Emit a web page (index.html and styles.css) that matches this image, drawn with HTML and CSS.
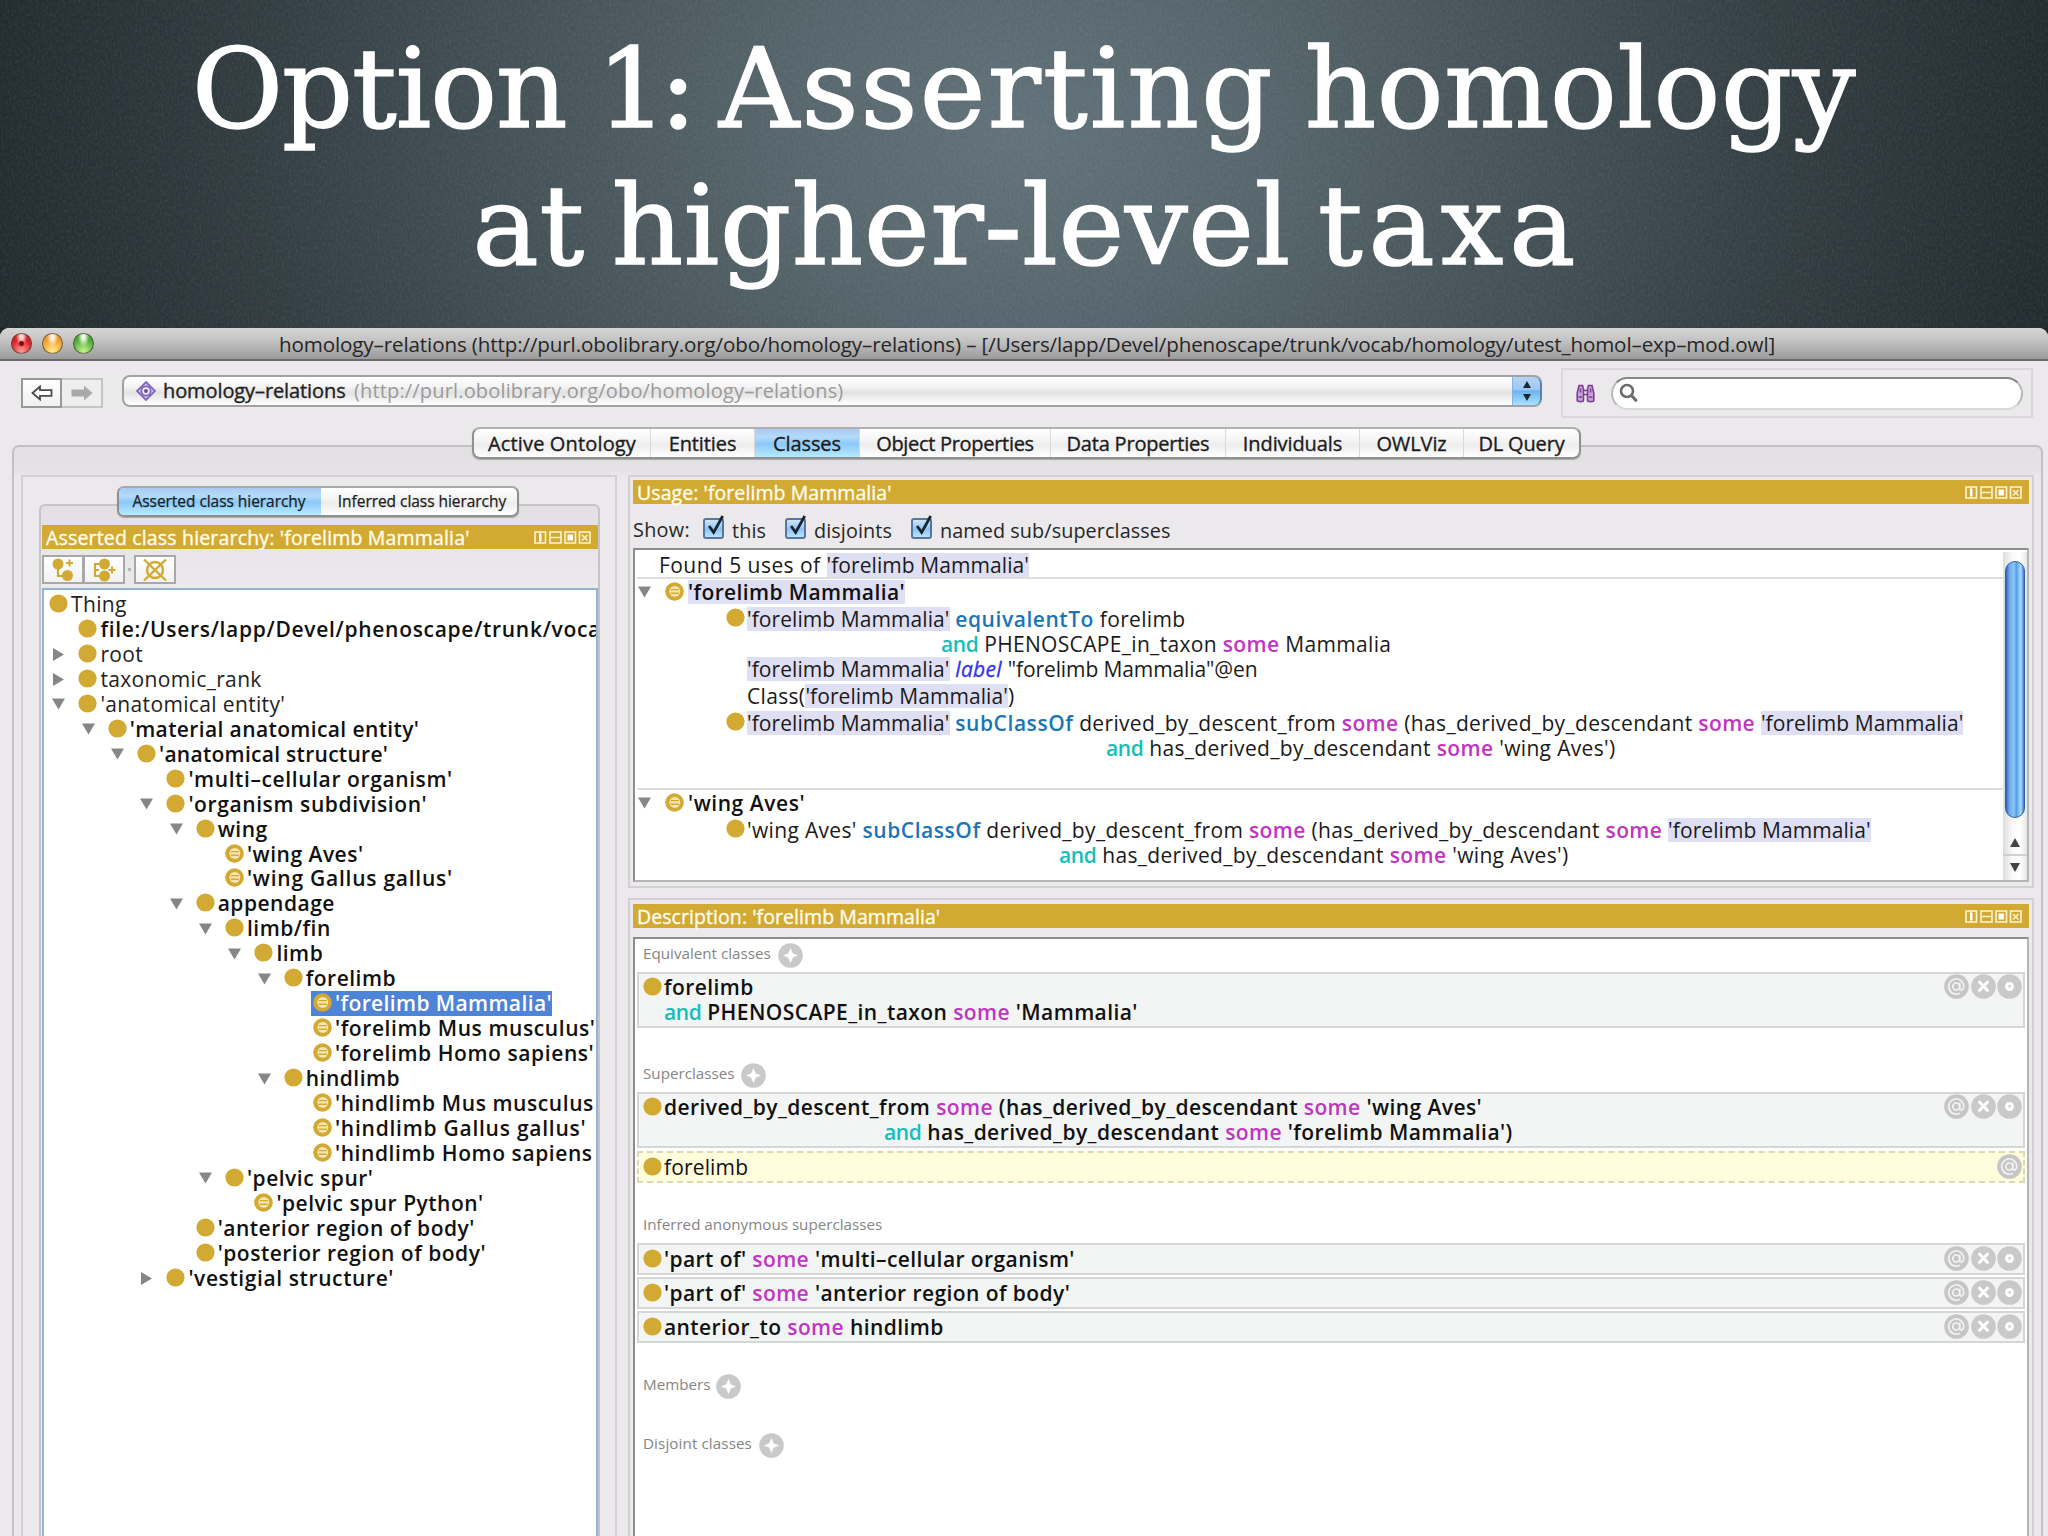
FILE: index.html
```html
<!DOCTYPE html>
<html lang="en">
<head>
<meta charset="utf-8">
<title>Option 1: Asserting homology at higher-level taxa</title>
<link rel="stylesheet" href="styles.css">
</head>
<body>
<svg class="defs" width="0" height="0" aria-hidden="true">
  <symbol id="dot" viewBox="0 0 20 20"><circle cx="10" cy="10" r="9.6" fill="#d2aa33"/></symbol>
  <symbol id="eq" viewBox="0 0 20 20"><circle cx="10" cy="10" r="9.8" fill="#d2aa33"/><circle cx="10.3" cy="9.800" r="5.700" fill="#f6e6b4"/><path d="M6 8h8.500M6 11.800h8.500" stroke="#d2aa33" stroke-width="1.500"/></symbol>
  <symbol id="down" viewBox="0 0 14 12"><path d="M0 0h14L7 12z" fill="#868686"/></symbol>
  <symbol id="right" viewBox="0 0 12 14"><path d="M0 0v14l12-7z" fill="#868686"/></symbol>
  <symbol id="plus" viewBox="0 0 26 26"><circle cx="13" cy="13" r="12.8" fill="#c9c9c9"/><path d="M13 7l1.800 4.200L19 13l-4.200 1.800L13 19l-1.800-4.200L7 13l4.200-1.800z" fill="#fff" stroke="#fff" stroke-width="1.400"/></symbol>
  <symbol id="x" viewBox="0 0 26 26"><circle cx="13" cy="13" r="12.8" fill="#c9c9c9"/><path d="M8 7.500l10 10.500M18 7.500L8 18" stroke="#fff" stroke-width="3.2"/></symbol>
  <symbol id="o" viewBox="0 0 26 26"><circle cx="13" cy="13" r="12.8" fill="#c9c9c9"/><circle cx="13" cy="13" r="4.600" fill="#fff"/><circle cx="13" cy="13" r="1.500" fill="#d4d4d4"/></symbol>
  <symbol id="at" viewBox="0 0 26 26"><circle cx="13" cy="13" r="12.8" fill="#c6c6c6"/><circle cx="12.700" cy="13" r="3.600" fill="none" stroke="#f4f4f4" stroke-width="1.700"/><path d="M16.500 9v6.200c0 2.600 4 2 4-2.400a7.800 8 0 1 0-4 7.200" fill="none" stroke="#f4f4f4" stroke-width="1.700"/></symbol>
  <symbol id="wins" viewBox="0 0 57 13"><g fill="none" stroke="#fdf3d3" stroke-width="1.600"><path d="M1 1h10.500v11H1zM6.200 1v11M16 1h11v11H16zM16 6.500h11M31 1h10.500v11H31zM45.500 1h10.500v11H45.500zM48 4l5.500 5.500M53.500 4L48 9.500"/></g><path d="M5 3h2.500v7H5zM33.500 3.500h5.500v6h-5.500z" fill="#fff"/></symbol>
</svg>

<header class="slide-title">
  <svg class="grain" aria-hidden="true"><filter id="noise"><feTurbulence type="fractalNoise" baseFrequency=".5 .3" numOctaves="2" seed="4"/><feColorMatrix values="0 0 0 0 .75  0 0 0 0 .8  0 0 0 0 .85  1.200 0 0 0 -.45"/></filter><rect width="100%" height="100%" filter="url(#noise)"/></svg>
  <h1><span class="line-one">Option <span class="num">1:</span> <span class="word-b">Asserting</span> <span class="word-c">homology</span></span><br><span class="line-two">at higher-level <span class="word-d">taxa</span></span></h1>
</header>

<main class="window">
  <div class="titlebar">
    <div class="lights"><i class="light red"></i><i class="light amber"></i><i class="light green"></i></div>
    <div class="window-name">homology–relations (http://purl.obolibrary.org/obo/homology–relations) – [/Users/lapp/Devel/phenoscape/trunk/vocab/homology/utest_homol–exp–mod.owl]</div>
  </div>

  <div class="toolbar">
    <div class="nav">
      <button class="nav-btn"><svg width="22" height="16" viewBox="0 0 22 16"><path d="M1.500 8L9 1.500v3.700h11.500v5.600H9v3.700z" fill="#fff" stroke="#4a4a4a" stroke-width="1.800"/></svg></button>
      <button class="nav-btn off"><svg width="22" height="16" viewBox="0 0 22 16"><path d="M21.500 8L13 .5v4H.5v7H13v4z" fill="#a9a9a9"/></svg></button>
    </div>
    <div class="combo">
      <svg class="gem" width="20" height="22" viewBox="0 0 20 20"><path d="M10 1l9 9-9 9-9-9z" fill="#cfc4ea" stroke="#8068bd" stroke-width="1.800"/><circle cx="10" cy="10" r="4.600" fill="#f1ecfb" stroke="#7a62b8" stroke-width="1.700"/><circle cx="10" cy="10" r="2" fill="#6a4fb0"/></svg>
      <span class="combo-name">homology–relations</span>
      <span class="combo-iri">(http://purl.obolibrary.org/obo/homology–relations)</span>
      <span class="stepper"><svg width="8" height="20" viewBox="0 0 8 20"><path d="M4 0l4 7H0zM4 20l4-7H0z" fill="#1c2733"/></svg></span>
    </div>
    <div class="search">
      <svg width="19" height="19" viewBox="0 0 19 19"><g fill="#c9a3d8" stroke="#7a3f94" stroke-width="1.600"><path d="M3 1.500h3.500l1 3.500V16.500c0 1.500-6.300 1.500-6.300 0V9z"/><path d="M16 1.500h-3.500l-1 3.500V16.500c0 1.500 6.300 1.500 6.300 0V9z"/></g><path d="M7 6.500h5M7 10.500h5M2.500 13h3.500M13 13h3.500M4.500 4.500v4M14.500 4.500v4" stroke="#7a3f94" stroke-width="1.500"/></svg>
      <div class="field"><svg width="20" height="20" viewBox="0 0 20 20"><circle cx="8" cy="8" r="6" fill="none" stroke="#6d6d6d" stroke-width="2.600"/><path d="M12.300 12.300l5.400 6" stroke="#6d6d6d" stroke-width="3.200"/></svg></div>
    </div>
  </div>

  <nav class="tabs">
    <span class="tab t-ont">Active Ontology</span><span class="tab t-ent">Entities</span><span class="tab t-cls on">Classes</span><span class="tab t-obj">Object Properties</span><span class="tab t-dat">Data Properties</span><span class="tab t-ind">Individuals</span><span class="tab t-viz">OWLViz</span><span class="tab t-dl">DL Query</span>
  </nav>

  <div class="workspace">
    <section class="panel left">
      <div class="subtabs"><span class="subtab on">Asserted class hierarchy</span><span class="subtab">Inferred class hierarchy</span></div>
      <div class="group">
        <div class="bar"><span class="bar-wide">Asserted class hierarchy: 'forelimb Mammalia'</span><svg class="wins"><use href="#wins"/></svg></div>
        <div class="tree-tools">
          <button class="tool"><svg width="24" height="24" viewBox="0 0 24 24"><path d="M7 6v12h9" fill="none" stroke="#d2aa33" stroke-width="2.200"/><circle cx="7" cy="6" r="5.500" fill="#d2aa33"/><circle cx="16.500" cy="17.500" r="5.500" fill="#d2aa33"/><path d="M18.500 1.500v7M15 5h7" stroke="#d2aa33" stroke-width="2"/></svg></button>
          <button class="tool"><svg width="24" height="24" viewBox="0 0 24 24"><path d="M12 6H3v12h9M3 12h4" fill="none" stroke="#d2aa33" stroke-width="2.200"/><circle cx="12.500" cy="6" r="5.500" fill="#d2aa33"/><circle cx="12.500" cy="18" r="5.500" fill="#d2aa33"/><path d="M20 8.500v7M16.500 12h7" stroke="#d2aa33" stroke-width="2"/></svg></button>
          <i class="sep"></i>
          <button class="tool"><svg width="24" height="24" viewBox="0 0 24 24"><g fill="none" stroke="#d2aa33" stroke-width="2.400"><circle cx="12" cy="12" r="8"/><path d="M1 1.500l22 21M23 1.500l-22 21"/></g></svg></button>
        </div>
        <ul class="tree">
          <li class="thin l0"><svg class="cls"><use href="#dot"/></svg>Thing</li>
          <li class="l1 path"><svg class="cls"><use href="#dot"/></svg>file:/Users/lapp/Devel/phenoscape/trunk/voca</li>
          <li class="thin l1"><svg class="tri side"><use href="#right"/></svg><svg class="cls"><use href="#dot"/></svg>root</li>
          <li class="thin l1"><svg class="tri side"><use href="#right"/></svg><svg class="cls"><use href="#dot"/></svg>taxonomic_rank</li>
          <li class="thin l1"><svg class="tri"><use href="#down"/></svg><svg class="cls"><use href="#dot"/></svg>'anatomical entity'</li>
          <li class="l2"><svg class="tri"><use href="#down"/></svg><svg class="cls"><use href="#dot"/></svg>'material anatomical entity'</li>
          <li class="l3"><svg class="tri"><use href="#down"/></svg><svg class="cls"><use href="#dot"/></svg>'anatomical structure'</li>
          <li class="l4"><svg class="cls"><use href="#dot"/></svg>'multi–cellular organism'</li>
          <li class="l4"><svg class="tri"><use href="#down"/></svg><svg class="cls"><use href="#dot"/></svg>'organism subdivision'</li>
          <li class="l5"><svg class="tri"><use href="#down"/></svg><svg class="cls"><use href="#dot"/></svg>wing</li>
          <li class="l6"><svg class="cls"><use href="#eq"/></svg>'wing Aves'</li>
          <li class="l6 wide"><svg class="cls"><use href="#eq"/></svg>'wing Gallus gallus'</li>
          <li class="l5"><svg class="tri"><use href="#down"/></svg><svg class="cls"><use href="#dot"/></svg>appendage</li>
          <li class="l6"><svg class="tri"><use href="#down"/></svg><svg class="cls"><use href="#dot"/></svg>limb/fin</li>
          <li class="l7"><svg class="tri"><use href="#down"/></svg><svg class="cls"><use href="#dot"/></svg>limb</li>
          <li class="l8"><svg class="tri"><use href="#down"/></svg><svg class="cls"><use href="#dot"/></svg>forelimb</li>
          <li class="l9"><span class="picked"><svg class="cls"><use href="#eq"/></svg>'forelimb Mammalia'</span></li>
          <li class="l9"><svg class="cls"><use href="#eq"/></svg>'forelimb Mus musculus'</li>
          <li class="l9"><svg class="cls"><use href="#eq"/></svg>'forelimb Homo sapiens'</li>
          <li class="l8"><svg class="tri"><use href="#down"/></svg><svg class="cls"><use href="#dot"/></svg>hindlimb</li>
          <li class="l9"><svg class="cls"><use href="#eq"/></svg>'hindlimb Mus musculus</li>
          <li class="l9 wide"><svg class="cls"><use href="#eq"/></svg>'hindlimb Gallus gallus'</li>
          <li class="l9"><svg class="cls"><use href="#eq"/></svg>'hindlimb Homo sapiens</li>
          <li class="l6"><svg class="tri"><use href="#down"/></svg><svg class="cls"><use href="#dot"/></svg>'pelvic spur'</li>
          <li class="l7"><svg class="cls"><use href="#eq"/></svg>'pelvic spur Python'</li>
          <li class="l5"><svg class="cls"><use href="#dot"/></svg>'anterior region of body'</li>
          <li class="l5"><svg class="cls"><use href="#dot"/></svg>'posterior region of body'</li>
          <li class="l4"><svg class="tri side"><use href="#right"/></svg><svg class="cls"><use href="#dot"/></svg>'vestigial structure'</li>
        </ul>
      </div>
    </section>

    <div class="right">
      <section class="panel usage">
        <div class="bar"><span>Usage: 'forelimb Mammalia'</span><svg class="wins"><use href="#wins"/></svg></div>
        <div class="show">
          <span class="show-label">Show:</span>
          <span class="check"><i class="box"><svg viewBox="0 0 22 26"><path d="M4.500 13l5 7L19.500 2" fill="none" stroke="#17232f" stroke-width="3"/></svg></i>this</span>
          <span class="check"><i class="box"><svg viewBox="0 0 22 26"><path d="M4.500 13l5 7L19.500 2" fill="none" stroke="#17232f" stroke-width="3"/></svg></i>disjoints</span>
          <span class="check"><i class="box"><svg viewBox="0 0 22 26"><path d="M4.500 13l5 7L19.500 2" fill="none" stroke="#17232f" stroke-width="3"/></svg></i>named sub/superclasses</span>
        </div>
        <div class="uses">
          <div class="uses-list">
            <div class="found">Found 5 uses of <mark>'forelimb Mammalia'</mark></div>
            <div class="use-head"><svg class="tri"><use href="#down"/></svg><svg class="cls"><use href="#eq"/></svg><mark>'forelimb Mammalia'</mark></div>
            <div class="use first"><svg class="cls"><use href="#dot"/></svg><span><mark>'forelimb Mammalia'</mark> <b class="rel">equivalentTo</b> forelimb</span></div>
            <div class="use more in-a"><span><b class="and">and</b> PHENOSCAPE_in_taxon <b class="some">some</b> Mammalia</span></div>
            <div class="use plain"><span><mark>'forelimb Mammalia'</mark> <em class="annot">label</em> <span class="literal">"forelimb Mammalia"@en</span></span></div>
            <div class="use plain"><span>Class(<mark>'forelimb Mammalia'</mark>)</span></div>
            <div class="use"><svg class="cls"><use href="#dot"/></svg><span><mark>'forelimb Mammalia'</mark> <b class="rel">subClassOf</b> derived_by_descent_from <b class="some">some</b> (has_derived_by_descendant <b class="some">some</b> <mark>'forelimb Mammalia'</mark></span></div>
            <div class="use more in-b"><span><b class="and">and</b> has_derived_by_descendant <b class="some">some</b> 'wing Aves')</span></div>
            <div class="use-head next"><svg class="tri"><use href="#down"/></svg><svg class="cls"><use href="#eq"/></svg>'wing Aves'</div>
            <div class="use"><svg class="cls"><use href="#dot"/></svg><span>'wing Aves' <b class="rel">subClassOf</b> derived_by_descent_from <b class="some">some</b> (has_derived_by_descendant <b class="some">some</b> <mark>'forelimb Mammalia'</mark></span></div>
            <div class="use more in-c"><span><b class="and">and</b> has_derived_by_descendant <b class="some">some</b> 'wing Aves')</span></div>
          </div>
          <div class="scroll"><i class="thumb"></i><i class="arrow up"></i><i class="rule"></i><i class="arrow dn"></i></div>
        </div>
      </section>

      <section class="panel description">
        <div class="bar"><span>Description: 'forelimb Mammalia'</span><svg class="wins"><use href="#wins"/></svg></div>
        <div class="axioms">
          <h2>Equivalent classes <svg class="round"><use href="#plus"/></svg></h2>
          <div class="axiom"><svg class="cls"><use href="#dot"/></svg><div class="expr"><div>forelimb</div><div><b class="and">and</b> PHENOSCAPE_in_taxon <b class="some">some</b> 'Mammalia'</div></div><div class="acts"><svg class="round"><use href="#at"/></svg><svg class="round"><use href="#x"/></svg><svg class="round"><use href="#o"/></svg></div></div>
          <h2 class="gap-a">Superclasses <svg class="round"><use href="#plus"/></svg></h2>
          <div class="axiom"><svg class="cls"><use href="#dot"/></svg><div class="expr"><div>derived_by_descent_from <b class="some">some</b> (has_derived_by_descendant <b class="some">some</b> 'wing Aves'</div><div class="in-d"><b class="and">and</b> has_derived_by_descendant <b class="some">some</b> 'forelimb Mammalia')</div></div><div class="acts"><svg class="round"><use href="#at"/></svg><svg class="round"><use href="#x"/></svg><svg class="round"><use href="#o"/></svg></div></div>
          <div class="axiom inferred"><svg class="cls"><use href="#dot"/></svg><div class="expr"><div>forelimb</div></div><div class="acts"><svg class="round"><use href="#at"/></svg></div></div>
          <h2 class="gap-b">Inferred anonymous superclasses</h2>
          <div class="axiom single"><svg class="cls"><use href="#dot"/></svg><div class="expr"><div>'part of' <b class="some">some</b> 'multi–cellular organism'</div></div><div class="acts"><svg class="round"><use href="#at"/></svg><svg class="round"><use href="#x"/></svg><svg class="round"><use href="#o"/></svg></div></div>
          <div class="axiom single"><svg class="cls"><use href="#dot"/></svg><div class="expr"><div>'part of' <b class="some">some</b> 'anterior region of body'</div></div><div class="acts"><svg class="round"><use href="#at"/></svg><svg class="round"><use href="#x"/></svg><svg class="round"><use href="#o"/></svg></div></div>
          <div class="axiom single"><svg class="cls"><use href="#dot"/></svg><div class="expr"><div>anterior_to <b class="some">some</b> hindlimb</div></div><div class="acts"><svg class="round"><use href="#at"/></svg><svg class="round"><use href="#x"/></svg><svg class="round"><use href="#o"/></svg></div></div>
          <h2 class="gap-c">Members <svg class="round"><use href="#plus"/></svg></h2>
          <h2 class="gap-d">Disjoint classes <svg class="round"><use href="#plus"/></svg></h2>
        </div>
      </section>
    </div>
  </div>
</main>
</body>
</html>
```
FILE: styles.css
```css
*, *::before, *::after { box-sizing: border-box; }

body {
  margin: 0;
  width: 2048px;
  height: 1536px;
  overflow: hidden;
  background: #20272c;
  color: #1a1a1a;
  font: 21px/25px "Open Sans", "Noto Sans", sans-serif;
  letter-spacing: .33px;
  display: flex;
  flex-direction: column;
}
svg { display: block; flex: none; }
.defs { position: absolute; }

/* Slide heading */
.slide-title {
  position: relative;
  height: 328px;
  flex: none;
  padding-top: 20px;
  background:
    radial-gradient(ellipse 1150px 900px at 50% 42%, #62727a 0%, #56656b 22%, #414e53 48%, #2c363b 75%, #1c2429 100%);
}
.grain { position: absolute; inset: 0; width: 100%; height: 100%; opacity: .13; }
h1 {
  position: relative;
  margin: 0;
  text-align: center;
  color: #fff;
  font: 400 111px/137px "DejaVu Serif", serif;
  -webkit-text-stroke: 1.6px #fff;
}
.line-one { letter-spacing: -1px; word-spacing: -4px; }
.num { letter-spacing: -8px; }
.word-b { letter-spacing: 2.200px; }
.word-c { letter-spacing: .6px; }
.line-two { letter-spacing: .7px; word-spacing: -9px; }
.word-d { letter-spacing: 6px; margin-right: -6px; }

/* Window frame */
.window {
  flex: 1;
  min-height: 0;
  display: flex;
  flex-direction: column;
  background: #ebe9eb;
  border-radius: 9px 9px 0 0;
  overflow: hidden;
}
.titlebar {
  height: 33px;
  flex: none;
  display: flex;
  align-items: center;
  background: linear-gradient(#d6d6d6, #c3c3c3 40%, #9b9b9b);
  border-bottom: 2px solid #6a6a6a;
}
.lights { display: flex; gap: 10px; padding-left: 11px; width: 279px; }
.light {
  width: 21px; height: 21px; border-radius: 50%;
  border: 1px solid rgba(60, 50, 40, .65);
}
.red { background: radial-gradient(circle at 50% 50%, #7d0c10 0 14%, transparent 24%), radial-gradient(ellipse at 50% 12%, #ffd6d0 0 12%, transparent 42%), radial-gradient(circle at 50% 90%, #ff9a90, #d8232a 60%); }
.amber { background: radial-gradient(ellipse at 50% 14%, #fff1dc 0 12%, transparent 42%), radial-gradient(circle at 50% 90%, #ffee8c, #ef9a2e 65%); }
.green { background: radial-gradient(ellipse at 50% 14%, #e9fbe0 0 12%, transparent 42%), radial-gradient(circle at 50% 90%, #c6f58e, #4fa63a 65%); }
.window-name { font-size: 20.6px; letter-spacing: -.125px; color: #262626; white-space: nowrap; padding-top: 1px; }

/* Toolbar */
.toolbar { height: 66px; flex: none; display: flex; align-items: center; padding: 0 15px 2px 21px; }
button { font: inherit; padding: 0; margin: 0; }
.nav { display: flex; width: 101px; }
.nav-btn {
  width: 41px; height: 30px;
  display: flex; align-items: center; justify-content: center;
  background: linear-gradient(#fff, #f0f0f0);
  border: 2px solid #989898;
}
.nav-btn.off { border-color: #c4c4c4; border-left: 0; background: #efeeef; }
.combo {
  width: 1420px; height: 32px; margin-bottom: 5px;
  display: flex; align-items: center;
  padding-left: 12px;
  background: linear-gradient(#fff, #f4f4f4 35%, #e3e2e3 55%, #fff);
  border: 2px solid #a2a2a2;
  border-right: 0;
  border-radius: 8px;
  white-space: nowrap;
  overflow: hidden;
  font-size: 20px;
}
.gem { margin-right: 7px; }
.combo-name { -webkit-text-stroke: .35px #222; letter-spacing: -.1px; width: 191px; color: #222; }
.combo-iri { color: #9a9a9a; letter-spacing: .16px; }
.stepper {
  margin-left: auto; width: 30px; height: 32px;
  display: flex; align-items: center; justify-content: center;
  background: linear-gradient(#b5d3f5, #9cc8f4 45%, #6cb2ef 50%, #a9e2ff);
  border: 2px solid #5f7fae; border-left: 1px solid #8fb1d8;
  border-radius: 0 8px 8px 0;
}
.search {
  margin-left: 19px; width: 472px; height: 50px;
  display: flex; align-items: center; gap: 16px;
  padding: 0 8px 0 13px;
  border: 2px solid #dad8da;
}
.field {
  flex: 1; height: 33px; display: flex; align-items: center; padding-left: 6px;
  background: #fff;
  border: 2px solid #b9b9b9; border-top-color: #858585; border-bottom-color: #d8d8d8;
  border-radius: 17px;
}

/* Tabs */
.tabs {
  position: relative;
  z-index: 1;
  align-self: flex-start;
  display: flex;
  height: 32px;
  margin: 0 0 -14px 472px;
  border: 2px solid #909090;
  border-top-color: #b0b0b0;
  border-radius: 8px;
  overflow: hidden;
  background: linear-gradient(#fff, #f3f3f3 45%, #ececec 55%, #fff);
  font-size: 20px;
  -webkit-text-stroke: .35px #222;
  letter-spacing: -.1px;
  box-shadow: 0 1px 1px rgba(0, 0, 0, .25);
}
.tab {
  display: flex; align-items: center; justify-content: center;
  border-left: 1px solid #dadada;
  white-space: nowrap;
}
.tab:first-child { border-left: 0; }
.t-ont { width: 176px; letter-spacing: .15px; }
.t-ent { width: 104px; }
.t-cls { width: 105px; }
.t-obj { width: 191px; letter-spacing: -.3px; }
.t-dat { width: 175px; letter-spacing: -.2px; }
.t-ind { width: 134px; }
.t-viz { width: 104px; }
.t-dl { width: 116px; letter-spacing: -.15px; }
.on { background: linear-gradient(#a9caf2, #b4dbfb 30%, #8cc8f8 52%, #b5eaff); }

/* Workspace */
.workspace {
  flex: 1; min-height: 0;
  margin: 0 5px 0 12px;
  padding: 28px 7px 0 7px;
  display: grid;
  grid-template-columns: 596px 1406px;
  column-gap: 11px;
  border: 2px solid #c2c0c3;
  border-bottom: 0;
  border-radius: 7px 7px 0 0;
  background: linear-gradient(#e2e0e2, #e4e2e4 24px, #ebe9eb 30px);
}
.panel { border: 2px solid #d2d0d3; min-width: 0; }
.right { display: flex; flex-direction: column; gap: 10px; min-height: 0; }

.left { display: flex; flex-direction: column; padding: 9px 15px 0 16px; border-bottom: 0; min-height: 0; }
.subtabs {
  position: relative;
  z-index: 1;
  align-self: flex-start;
  display: flex;
  width: 402px; height: 31px;
  margin: 0 0 -13px 78px;
  border: 2px solid #8f8f8f;
  border-top-color: #a8a8a8;
  border-radius: 7px;
  overflow: hidden;
  background: linear-gradient(#fff, #f3f3f3 45%, #ececec 55%, #fff);
  font-size: 15.5px;
  -webkit-text-stroke: .25px #222;
  letter-spacing: -.05px;
  box-shadow: 0 1px 1px rgba(0, 0, 0, .25);
}
.subtab { flex: 1; display: flex; align-items: center; justify-content: center; white-space: nowrap; padding-left: 6px; }
.subtab.on { flex: 0 0 202px; padding: 0 2px 0 0; }
.group {
  flex: 1; min-height: 0;
  display: flex; flex-direction: column;
  border: 2px solid #c6c4c7; border-bottom: 0;
  border-radius: 6px 6px 0 0;
  padding: 19px 0 0 1px;
  background: linear-gradient(#e2e0e2, #e6e4e6 30px, #ebe9eb 80px);
}
.bar {
  height: 24px; flex: none;
  display: flex; align-items: center; justify-content: space-between;
  padding: 0 7px 0 4px;
  background: #d2aa33;
  color: #fffbe9;
  -webkit-text-stroke: .4px #fffbe9;
  font-size: 19.5px; letter-spacing: .07px;
  white-space: nowrap;
}
.left .bar { width: 556px; }
.bar-wide { letter-spacing: .17px; }
.wins { width: 57px; height: 13px; }
.tree-tools { height: 39px; flex: none; display: flex; padding-top: 6px; }
.tool {
  width: 42px; height: 29px;
  display: flex; align-items: center; justify-content: center;
  border: 2px solid #a8a8a8; background: linear-gradient(#fff, #f2f2f2);
}
.tool + .tool { margin-left: -1px; }
.sep { width: 3px; height: 3px; margin: 13px 3px 0 3px; background: #b5b5b5; }

.tree {
  flex: 1; width: 556px; margin: 0; padding: 2px 0 0 5px;
  list-style: none; overflow: hidden;
  background: #fff; border: 2px solid #93b3d9; border-bottom: 0;
  color: #111;
}
.tree li {
  display: flex; align-items: center;
  height: 24.96px;
  font-weight: 600; letter-spacing: .5px;
  white-space: nowrap;
}
.tree li.thin { font-weight: 400; letter-spacing: .35px; color: #222; }
.tree li.path { letter-spacing: .7px; }
.tree li.l2 { letter-spacing: .38px; }
.tree li.l3 { letter-spacing: .28px; }
.tree li.l4 { letter-spacing: .6px; }
.tree li.l9 { letter-spacing: .58px; }
.tree li.wide { letter-spacing: .75px; }
.cls { width: 19px; height: 19px; margin-right: 3px; position: relative; top: -1px; }
.tri { width: 13px; height: 12px; margin-left: -26px; margin-right: 13px; }
.tri.side { width: 11px; height: 13px; margin-left: -25px; margin-right: 14px; }
.l1 { padding-left: 29.4px; }
.l2 { padding-left: 58.7px; }
.l3 { padding-left: 88px; }
.l4 { padding-left: 117.4px; }
.l5 { padding-left: 146.7px; }
.l6 { padding-left: 176px; }
.l7 { padding-left: 205.4px; }
.l8 { padding-left: 234.7px; }
.l9 { padding-left: 264px; }
.picked { display: flex; align-items: center; height: 25px; background: #4d84d8; color: #fff; margin-left: -2px; padding-left: 2px; letter-spacing: .38px; }

/* Usage panel */
.usage { height: 413px; flex: none; padding: 3px 3px 0; }
.show { height: 44px; padding-top: 8px; display: flex; align-items: center; font-size: 19.8px; letter-spacing: 0; color: #262626; }
.show-label { width: 70px; letter-spacing: .3px; padding-bottom: 2px; }
.check { display: flex; align-items: center; margin-right: 19px; letter-spacing: .1px; }
.box {
  width: 21px; height: 21px; margin: 0 8px 3px 0; display: block; position: relative;
  border: 2px solid #56779f; border-radius: 3px;
  background: linear-gradient(#cfe4f9, #8dc3f5 55%, #b8e4ff);
}
.box svg { position: absolute; left: 0; top: -6px; width: 20px; height: 24px; }
.uses { height: 334px; display: flex; background: #fff; border: 2px solid #8d8d8d; border-right-color: #b5b5b5; border-bottom-color: #b5b5b5; }
.uses-list { flex: 1; min-width: 0; padding-left: 2px; white-space: nowrap; }
mark { display: inline-block; height: 24px; line-height: 24px; background: #dfdff4; color: inherit; letter-spacing: .08px; vertical-align: top; }
.found { height: 29px; line-height: 24px; padding: 3px 0 0 22px; border-bottom: 2px solid #dedede; letter-spacing: .45px; }
.use-head { height: 26px; display: flex; align-items: center; padding-left: 28px; font-weight: 600; letter-spacing: .55px; color: #111; }
.use-head .tri { margin-right: 14px; margin-left: -27px; }
.use-head .cls { margin-right: 4px; }
.use-head mark { letter-spacing: .38px; }
.use-head.next { margin-top: 28px; border-top: 2px solid #dedede; height: 28px; }
.use { height: 27px; display: flex; align-items: center; padding-left: 89px; }
.use > span { line-height: 24px; height: 24px; }
.use.plain { padding-left: 110px; height: 26.5px; }
.use .cls { margin-right: 2px; }
.use.more { height: 24px; }
.use.in-a { padding-left: 304px; }
.use.in-b { padding-left: 469px; }
.use.in-c { padding-left: 422px; }
.literal { letter-spacing: -.1px; }
b { font-weight: 600; letter-spacing: .4px; }
.rel { color: #1b74b8; letter-spacing: .55px; }
.and { color: #17bdbb; letter-spacing: -.4px; }
.some { color: #bf35c1; }
.annot { color: #3333ee; letter-spacing: .3px; -webkit-text-stroke: .3px #3333ee; }
.scroll {
  width: 24px; height: 328px; margin: 2px 0;
  display: flex; flex-direction: column; align-items: center;
  padding-top: 9px;
  background: linear-gradient(90deg, #dcdcdc, #fafafa 40%, #fff 70%, #e6e6e6);
}
.thumb {
  width: 20px; height: 257px; border-radius: 10px;
  background: linear-gradient(90deg, #2c63b4, #6ba7ea 18%, #8fc4f6 42%, #5a9ee8 58%, #a8dcfd 82%, #3f78c4);
  border: 1px solid #2e5fa6;
}
.arrow { display: block; width: 0; height: 0; border: 5px solid transparent; }
.up { border-bottom: 9px solid #444; border-top: 0; margin-top: 20px; }
.rule { width: 24px; height: 2px; margin: 7px 0; background: #d0d0d0; }
.dn { border-top: 9px solid #444; border-bottom: 0; }

/* Description panel */
.description { flex: 1; min-height: 0; padding: 4px 3px 0; border-bottom: 0; display: flex; flex-direction: column; }
.axioms {
  flex: 1; min-height: 0; margin-top: 9px; padding-left: 2px;
  background: #fff; border: 2px solid #8d8d8d; border-right-color: #b5b5b5; border-bottom: 0;
  white-space: nowrap;
}
h2 {
  margin: 0; padding: 0 0 5px 6px; height: 33px;
  display: flex; align-items: center; gap: 7px;
  font: 400 15.2px/26px "Open Sans", sans-serif;
  letter-spacing: 0; color: #858585;
}
h2 .round { position: relative; top: 2px; }
.round { width: 25px; height: 25px; }
.axiom {
  display: flex; align-items: flex-start;
  width: 1388px;
  border: 2px solid #d5d7d7;
  background: #f2f5f4;
  padding: 0 1px 1px 4px;
  font-weight: 600; letter-spacing: .42px; color: #111;
}
.axiom .cls { margin: 4px 2px 0 0; top: -1px; }
.expr { flex: 1; padding-top: 1px; }
.expr > div { height: 25px; line-height: 25px; }
.in-d { padding-left: 220px; }
.acts { display: flex; gap: 1.500px; }
.inferred {
  margin-top: 3px; height: 32px; padding-top: 1px;
  background: #fffddc; border: 2px dashed #d9d9b4;
  font-weight: 400; letter-spacing: .15px;
}
.single { height: 32px; padding-top: 1px; margin-bottom: 2px; }
.gap-a { margin-top: 31px; }
.gap-b { margin-top: 27px; }
.gap-c { margin-top: 27px; gap: 5px; }
.gap-d { margin-top: 26px; letter-spacing: .1px; }
```
